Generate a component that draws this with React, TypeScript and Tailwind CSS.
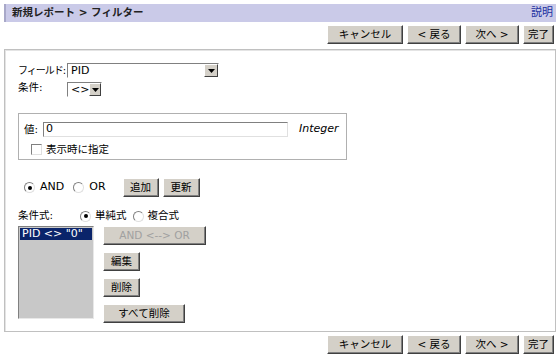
import React from "react";

const jp = { fontFamily: '"DejaVu Sans", "Noto Sans CJK JP", sans-serif' };

const Btn = ({ label, w, disabled }: { label: string; w: number; disabled?: boolean }) => (
  <div
    className={`flex h-[19px] items-center justify-center whitespace-nowrap border border-t-white border-l-white border-r-[#404040] border-b-[#404040] bg-[#d4d0c8] shadow-[inset_-1px_-1px_#808080] text-[10.5px] leading-none ${disabled ? "text-[#a0a0a0]" : "text-black"}`}
    style={{ width: w }}
  >
    {label}
  </div>
);

const Arrow = () => (
  <div className="flex h-full w-[14px] items-center justify-center border border-t-white border-l-white border-r-[#404040] border-b-[#404040] bg-[#d4d0c8]">
    <svg width="7" height="4" viewBox="0 0 7 4">
      <path d="M0 0H7L3.5 4Z" fill="black" />
    </svg>
  </div>
);

const Select = ({ value, w }: { value: string; w: number }) => (
  <div
    className="flex h-[15px] shrink-0 items-center border border-t-[#808080] border-l-[#808080] border-r-white border-b-white bg-white"
    style={{ width: w }}
  >
    <span className="flex-1 pl-[3px] text-[11px] leading-none">{value}</span>
    <Arrow />
  </div>
);

const Radio = ({ on }: { on?: boolean }) => (
  <div className="flex h-[11px] w-[11px] items-center justify-center rounded-full border border-t-[#808080] border-l-[#808080] border-r-[#e0e0e0] border-b-[#e0e0e0] bg-white">
    {on && <div className="h-[4px] w-[4px] rounded-full bg-black" />}
  </div>
);

const NavButtons = () => (
  <div className="flex justify-end gap-[4px] pr-[2px]">
    <Btn label="キャンセル" w={76} />
    <Btn label="< 戻る" w={54} />
    <Btn label="次へ >" w={54} />
    <Btn label="完了" w={31} />
  </div>
);

export default function App() {
  return (
    <div className="h-[357px] w-[560px] bg-white px-[4px] pt-[4px] text-black" style={jp}>
      <div className="flex h-[18px] items-center justify-between border-l-2 border-[#a8a8c8] bg-[#cacae8] pl-[6px] pr-[3px]">
        <span className="text-[10.5px] font-bold text-[#222]">新規レポート &gt; フィルター</span>
        <span className="text-[11px] text-[#2030a0]">説明</span>
      </div>

      <div className="mt-[3px]">
        <NavButtons />
      </div>

      <div className="mt-[5px] h-[283px] border border-[#c0c0c0] shadow-[inset_1px_1px_#e4e4e4] pl-[13px] pt-[13px] text-[11px]">
        <div className="flex h-[15px] items-center">
          <span className="w-[49px] shrink-0 whitespace-nowrap text-[10px] tracking-[-1px]">フィールド:</span>
          <Select value="PID" w={152} />
        </div>
        <div className="mt-[4px] flex h-[15px] items-center">
          <span className="w-[49px] shrink-0 -translate-y-[2px] whitespace-nowrap text-[10.5px]">条件:</span>
          <Select value="<>" w={35} />
        </div>

        <div className="mt-[16px] h-[47px] w-[329px] border border-[#b0b0b0] pl-[5px] pt-[8px]">
          <div className="flex h-[15px] items-center">
            <span className="w-[19px] whitespace-nowrap text-[10.5px]">値:</span>
            <div className="flex h-[15px] w-[245px] items-center border border-t-[#808080] border-l-[#808080] border-r-[#e0e0e0] border-b-[#e0e0e0] pl-[2px] text-[11px]">
              0
            </div>
            <span className="ml-[11px] text-[11px] italic">Integer</span>
          </div>
          <div className="mt-[5px] flex items-center pl-[7px]">
            <div className="h-[11px] w-[11px] border border-t-[#808080] border-l-[#808080] border-r-[#e0e0e0] border-b-[#e0e0e0] bg-white" />
            <span className="ml-[4px] text-[10.5px]">表示時に指定</span>
          </div>
        </div>

        <div className="mt-[18px] flex h-[19px] items-center">
          <div className="ml-[6px]"><Radio on /></div>
          <span className="ml-[5px]">AND</span>
          <div className="ml-[9px]"><Radio /></div>
          <span className="ml-[5px]">OR</span>
          <div className="ml-[17px] flex gap-[4px]">
            <Btn label="追加" w={36} />
            <Btn label="更新" w={37} />
          </div>
        </div>

        <div className="mt-[12px] flex h-[14px] items-center text-[10.5px]">
          <span className="w-[62px] whitespace-nowrap">条件式:</span>
          <Radio on />
          <span className="ml-[4px]">単純式</span>
          <div className="ml-[6px]"><Radio /></div>
          <span className="ml-[4px]">複合式</span>
        </div>

        <div className="mt-[3px] flex">
          <div className="h-[93px] w-[76px] border border-t-[#808080] border-l-[#808080] border-r-[#e8e8e8] border-b-[#e8e8e8] bg-[#c8c8c8] p-[1px]">
            <div className="h-[12px] whitespace-nowrap bg-[#0a246a] pl-[2px] text-[11px] leading-[12px] text-white">PID &lt;&gt; "0"</div>
          </div>
          <div className="ml-[9px] flex flex-col gap-[7px]">
            <Btn label="AND <--> OR" w={103} disabled />
            <Btn label="編集" w={37} />
            <Btn label="削除" w={37} />
            <Btn label="すべて削除" w={82} />
          </div>
        </div>
      </div>

      <div className="mt-[3px]">
        <NavButtons />
      </div>
    </div>
  );
}
